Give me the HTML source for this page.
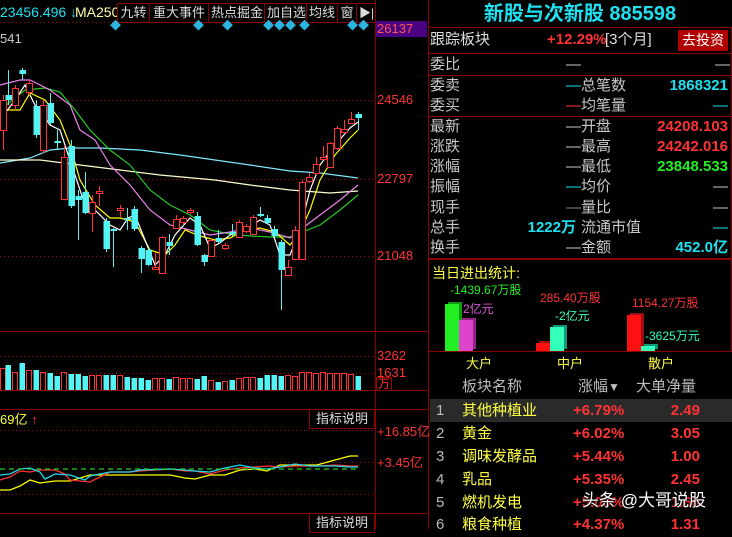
<!DOCTYPE html>
<html><head><meta charset="utf-8"><style>
*{margin:0;padding:0;box-sizing:border-box}
body{width:732px;height:529px;background:#000;overflow:hidden;position:relative;font-family:"Liberation Sans","Noto Sans CJK SC",sans-serif;color:#c8c8c8}
.a{position:absolute;white-space:nowrap;line-height:1}
.hl{position:absolute;height:1px;background:#8b0000}
.vl{position:absolute;width:1px;background:#8b0000}
.rw{position:absolute;left:430px;width:300px;height:20px;font-size:15px;line-height:20px}
.rw span{position:absolute;white-space:nowrap}
.c{color:#1ee0f0}.r{color:#ff3333}.g{color:#22ee22}.w{color:#ddd}.y{color:#ffff44}
.tb{position:absolute;top:3px;height:20px;border:1px solid #8b0000;font-size:13px;line-height:18px;color:#ddd;padding:0 2px;white-space:nowrap;overflow:hidden;text-align:center}
</style></head><body>
<svg class="a" style="left:0;top:0" width="430" height="529" id="sv">
<g stroke="#a00" stroke-dasharray="1 3" stroke-width="1">
<line x1="0" y1="22.5" x2="375" y2="22.5"/><line x1="0" y1="100.5" x2="375" y2="100.5"/><line x1="0" y1="179.5" x2="375" y2="179.5"/><line x1="0" y1="256.5" x2="375" y2="256.5"/>
<line x1="0" y1="356.5" x2="375" y2="356.5"/><line x1="0" y1="373.5" x2="375" y2="373.5"/>
<line x1="0" y1="430.5" x2="375" y2="430.5"/><line x1="0" y1="462.5" x2="375" y2="462.5"/><line x1="0" y1="494.5" x2="375" y2="494.5"/>
</g>
<g fill="none" stroke-width="1.2">
<polyline stroke="#7fe8ff" points="0,163 30,158 50,150 70,148 100,148 140,150 180,155 215,160 250,165 290,171 320,173 358,178"/>
<polyline stroke="#ffffcc" points="0,160 40,160 80,165 120,170 160,175 215,180 250,185 290,190 330,193 358,191"/>
<polyline stroke="#22cc22" points="0,110 25,90 45,88 60,92 75,110 90,130 110,150 130,165 150,190 170,205 190,215 210,230 230,234 250,236 270,237 290,237 300,233 320,225 340,210 358,195"/>
<polyline stroke="#ee82ee" points="0,85 20,80 30,80 50,90 70,105 80,130 95,140 110,165 130,185 150,210 170,225 190,230 210,235 230,232 250,228 270,232 290,238 300,230 320,215 340,200 358,185"/>
<polyline stroke="#ffff00" points="0,110 20,110 30,93 45,100 60,120 70,145 80,180 95,205 110,218 120,218 135,222 150,250 165,255 175,245 185,230 200,236 215,240 230,238 245,230 260,228 275,232 290,245 300,232 310,210 320,180 335,155 350,138 358,130"/>
<polyline stroke="#fff" points="0,120 15,100 25,85 35,105 50,125 60,130 70,160 85,205 95,210 110,225 120,230 128,218 135,215 145,240 155,265 165,255 175,235 190,218 200,225 210,248 220,243 230,235 245,230 260,220 270,225 280,255 290,255 300,230 310,190 320,165 335,145 350,128 358,122"/>
</g>
<g id="cd"></g><g id="vb"></g>
<g fill="none" stroke-width="1.3">
<polyline stroke="#ffff00" points="0,490 10,490 20,486 30,480 40,483 55,481 70,481 90,475 110,475 130,475 140,475 170,475 185,478 195,479 210,475 225,475 240,470 255,469 267,471 280,465 295,465 317,465 335,460 350,456 358,456"/>
<polyline stroke="#ff3333" points="0,480 10,477 20,471 30,472 40,470 55,470 65,474 70,480 90,482 110,472 130,472 140,471 170,469 185,471 195,471 210,474 225,470 240,468 255,467 267,466 280,467 295,466 317,466 335,465 350,466 358,466"/>
<polyline stroke="#22d8f0" points="0,475 10,474 20,469 30,468 40,472 45,479 55,474 70,475 85,480 90,476 110,472 130,472 140,470 170,469 185,470 195,471 210,472 225,468 240,465 255,468 267,469 280,467 295,464 310,466 335,466 350,467 358,467"/>
<polyline stroke="#22cc22" stroke-dasharray="5 4" points="0,469 358,469"/>
</g>
</svg>
<script>
var C=[[3,100,130,95,150,1],[8,95,100,70,105,0],[15,88,105,85,110,1],[22,70,74,68,80,0],[29,83,92,80,95,1],[36,106,135,100,138,0],[43,105,150,100,153,1],[50,103,123,93,125,0],[57,141,143,130,150,0],[64,157,199,145,200,1],[71,146,206,140,208,0],[78,196,200,190,240,0],[85,192,213,172,214,0],[92,202,213,195,232,1],[99,191,193,186,206,1],[106,221,249,218,252,0],[113,229,231,228,267,0],[120,208,210,205,217,1],[127,218,220,208,230,0],[134,209,229,206,231,0],[141,248,259,246,273,0],[148,250,265,248,266,0],[155,267,269,252,270,1],[162,237,273,236,274,1],[169,242,246,234,255,0],[176,219,228,215,229,1],[183,218,222,216,224,1],[190,210,212,208,214,1],[197,216,245,212,246,0],[204,255,262,254,266,0],[211,240,256,238,257,1],[218,238,242,230,243,0],[225,245,248,243,250,1],[232,232,234,224,236,0],[239,222,237,220,238,1],[246,226,231,224,233,1],[253,217,234,215,235,1],[260,214,216,207,217,0],[267,218,223,215,224,0],[274,229,236,226,237,0],[281,242,270,240,310,0],[288,267,275,260,276,1],[295,230,259,226,260,1],[302,182,259,180,260,1],[309,177,181,173,183,1],[316,164,173,157,175,1],[323,157,159,146,160,1],[330,143,167,142,168,1],[337,128,148,126,150,1],[344,129,132,120,134,1],[351,119,123,112,124,1],[358,114,118,112,130,0]];
var h='',v='',hs=[22,25,18,27,20,20,18,17,14,18,16,16,14,15,15,15,15,15,13,12,12,10,12,12,11,13,12,12,11,14,10,8,9,10,12,13,13,12,15,15,14,15,14,18,18,17,18,17,17,17,16,14];
C.forEach(function(c,i){var col=c[5]?'#ff3333':'#54f4f4';var x=c[0];
h+='<line x1="'+(x+.5)+'" y1="'+c[3]+'" x2="'+(x+.5)+'" y2="'+c[4]+'" stroke="'+col+'"/>';
var t=Math.min(c[1],c[2]),hh=Math.max(Math.abs(c[2]-c[1]),1);
if(c[5])h+='<rect x="'+(x-2.5)+'" y="'+(t+.5)+'" width="6" height="'+hh+'" fill="#000" stroke="'+col+'"/>';
else h+='<rect x="'+(x-2.5)+'" y="'+t+'" width="6.5" height="'+hh+'" fill="'+col+'"/>';
var vh=hs[i]||15;
if(c[5])v+='<rect x="'+(x-2.5)+'" y="'+(390.5-vh)+'" width="5" height="'+vh+'" fill="none" stroke="'+col+'"/>';
else v+='<rect x="'+(x-2.5)+'" y="'+(390-vh)+'" width="5.5" height="'+vh+'" fill="'+col+'"/>';});
document.getElementById('cd').innerHTML=h;document.getElementById('vb').innerHTML=v;
</script>
<!-- top bar -->
<div class="a c" style="left:0;top:5px;font-size:14px">23456.496 <b>↓</b></div>
<div class="a" style="left:75px;top:5px;width:42px;overflow:hidden;font-size:14px;color:#ffffaa">MA250: 2</div>
<div class="tb" style="left:117px;width:33px">九转</div>
<div class="tb" style="left:149px;width:60px">重大事件</div>
<div class="tb" style="left:208px;width:57px">热点掘金</div>
<div class="tb" style="left:264px;width:43px">加自选</div>
<div class="tb" style="left:306px;width:32px">均线</div>
<div class="tb" style="left:337px;width:20px">窗</div>
<div class="tb" style="left:356px;width:20px;font-size:12px">▶|</div>
<div class="a" style="left:0;top:32px;font-size:13px;color:#ccc">541</div>
<div class="a" style="left:110px;top:21px;font-size:11px;color:#2ab4e0">◆</div>
<div class="a" style="left:193px;top:21px;font-size:11px;color:#2ab4e0">◆</div>
<div class="a" style="left:222px;top:21px;font-size:11px;color:#2ab4e0">◆</div>
<div class="a" style="left:263px;top:21px;font-size:11px;color:#2ab4e0">◆◆◆</div>
<div class="a" style="left:299px;top:21px;font-size:11px;color:#2ab4e0">◆</div>
<div class="a" style="left:347px;top:21px;font-size:11px;color:#2ab4e0">◆◆</div>
<!-- axis -->
<div class="vl" style="left:375px;top:0;height:529px"></div>
<div class="vl" style="left:428px;top:0;height:529px"></div>
<div class="a" style="left:376px;top:21px;width:51px;height:16px;background:#4b0082;color:#ff5555;font-size:13px;padding:1px 0 0 1px">26137</div>
<div class="a r" style="left:377px;top:93px;font-size:13px">24546</div>
<div class="a r" style="left:377px;top:172px;font-size:13px">22797</div>
<div class="a r" style="left:377px;top:249px;font-size:13px">21048</div>
<div class="a r" style="left:377px;top:349px;font-size:13px">3262</div>
<div class="a r" style="left:377px;top:366px;font-size:13px">1631</div>
<div class="a r" style="left:376px;top:377px;font-size:12px;border:1px solid #a00;padding:0 1px">万</div>
<div class="hl" style="left:0;top:331px;width:428px"></div>
<div class="hl" style="left:0;top:390px;width:428px"></div>
<div class="hl" style="left:0;top:409px;width:428px"></div>
<div class="hl" style="left:0;top:513px;width:428px"></div>
<div class="a y" style="left:0;top:413px;font-size:13px">69亿 <span class="r">↑</span></div>
<div class="a" style="left:309px;top:409px;width:66px;height:20px;border:1px solid #8b0000;font-size:13px;line-height:18px;text-align:center;color:#ddd">指标说明</div>
<div class="a" style="left:309px;top:513px;width:66px;height:20px;border:1px solid #8b0000;font-size:13px;line-height:18px;text-align:center;color:#ddd">指标说明</div>
<div class="a r" style="left:377px;top:425px;font-size:13px">+16.85亿</div>
<div class="a r" style="left:377px;top:456px;font-size:13px">+3.45亿</div>
<!-- right panel -->
<div class="a c" style="left:428px;top:4px;width:304px;text-align:center;font-size:20px;font-weight:bold">新股与次新股 885598</div>
<div class="a" style="left:428px;top:27px;width:304px;height:232px;border:1px solid #8b0000"></div>
<div class="hl" style="left:428px;top:53px;width:304px"></div>
<div class="hl" style="left:428px;top:75px;width:304px"></div>
<div class="hl" style="left:428px;top:116px;width:304px"></div>
<div class="rw" style="top:30px"><span class="w">跟踪板块</span><span class="r" style="left:117px;font-weight:bold">+12.29%</span><span class="w" style="left:175px">[3个月]</span></div>
<div class="a" style="left:678px;top:30px;width:50px;height:21px;background:#b00000;color:#fff;font-size:14px;line-height:21px;text-align:center">去投资</div>
<div class="rw" style="top:55px"><span>委比</span><span style="left:136px">—</span><span style="left:285px">—</span></div>
<div class="rw" style="top:76px"><span>委卖</span><span class="c" style="left:136px">—</span><span style="left:151px">总笔数</span><span class="c" style="right:2px;font-weight:bold">1868321</span></div>
<div class="rw" style="top:96px"><span>委买</span><span class="r" style="left:136px">—</span><span style="left:151px">均笔量</span><span class="c" style="right:2px">—</span></div>
<div class="rw" style="top:117px"><span>最新</span><span style="left:136px">—</span><span style="left:151px">开盘</span><span class="r" style="right:2px;font-weight:bold">24208.103</span></div>
<div class="rw" style="top:137px"><span>涨跌</span><span style="left:136px">—</span><span style="left:151px">最高</span><span class="r" style="right:2px;font-weight:bold">24242.016</span></div>
<div class="rw" style="top:157px"><span>涨幅</span><span style="left:136px">—</span><span style="left:151px">最低</span><span class="g" style="right:2px;font-weight:bold">23848.533</span></div>
<div class="rw" style="top:177px"><span>振幅</span><span class="c" style="left:136px">—</span><span style="left:151px">均价</span><span style="right:2px">—</span></div>
<div class="rw" style="top:198px"><span>现手</span><span style="left:136px;color:#888">—</span><span style="left:151px">量比</span><span style="right:2px">—</span></div>
<div class="rw" style="top:218px"><span>总手</span><span class="c" style="right:154px;font-weight:bold">1222万</span><span style="left:151px">流通市值</span><span class="c" style="right:2px">—</span></div>
<div class="rw" style="top:238px"><span>换手</span><span style="left:136px">—</span><span style="left:151px">金额</span><span class="c" style="right:2px;font-weight:bold">452.0亿</span></div>
<div class="a" style="left:428px;top:259px;width:304px;height:93px;border:1px solid #8b0000"></div>
<div class="a y" style="left:432px;top:266px;font-size:14px">当日进出统计:</div>
<div class="a g" style="left:450px;top:284px;font-size:12px">-1439.67万股</div>
<div class="a" style="left:463px;top:303px;font-size:12px;color:#dd55dd">2亿元</div>
<div class="a r" style="left:540px;top:292px;font-size:12px">285.40万股</div>
<div class="a" style="left:555px;top:310px;font-size:12px;color:#33ffbb">-2亿元</div>
<div class="a r" style="left:632px;top:297px;font-size:12px">1154.27万股</div>
<div class="a" style="left:645px;top:330px;font-size:12px;color:#33ffbb">-3625万元</div>
<div class="a" style="left:445px;top:304px;width:14px;height:47px;background:#22ee22;box-shadow:3px -2px 0 #119911"></div>
<div class="a" style="left:459px;top:320px;width:14px;height:31px;background:#dd44cc;box-shadow:3px -2px 0 #992288"></div>
<div class="a" style="left:536px;top:343px;width:14px;height:8px;background:#ff1111;box-shadow:3px -2px 0 #991111"></div>
<div class="a" style="left:550px;top:327px;width:14px;height:24px;background:#33ffbb;box-shadow:3px -2px 0 #119977"></div>
<div class="a" style="left:627px;top:315px;width:14px;height:36px;background:#ff1111;box-shadow:3px -2px 0 #991111"></div>
<div class="a" style="left:641px;top:346px;width:14px;height:5px;background:#33ffbb;box-shadow:3px -2px 0 #119977"></div>
<div class="a y" style="left:466px;top:357px;font-size:13px">大户</div>
<div class="a y" style="left:557px;top:357px;font-size:13px">中户</div>
<div class="a y" style="left:648px;top:357px;font-size:13px">散户</div>
<div class="a" style="left:462px;top:379px;font-size:15px;color:#bbb">板块名称</div>
<div class="a" style="left:578px;top:379px;font-size:15px;color:#bbb">涨幅<span style="font-size:12px">▼</span></div>
<div class="a" style="left:636px;top:379px;font-size:15px;color:#bbb">大单净量</div>
<div class="a" style="left:430px;top:399px;width:302px;height:23px;background:#2a2a2a"></div>
<div class="rw" style="top:400px;height:23px;line-height:22px;font-size:15px"><span style="left:6px;color:#bbb">1</span><span class="y" style="left:32px">其他种植业</span><span class="r" style="left:143px;font-weight:bold">+6.79%</span><span class="r" style="right:30px;font-weight:bold">2.49</span></div>
<div class="rw" style="top:423px;height:23px;line-height:22px;font-size:15px"><span style="left:6px;color:#bbb">2</span><span class="y" style="left:32px">黄金</span><span class="r" style="left:143px;font-weight:bold">+6.02%</span><span class="r" style="right:30px;font-weight:bold">3.05</span></div>
<div class="rw" style="top:446px;height:23px;line-height:22px;font-size:15px"><span style="left:6px;color:#bbb">3</span><span class="y" style="left:32px">调味发酵品</span><span class="r" style="left:143px;font-weight:bold">+5.44%</span><span class="r" style="right:30px;font-weight:bold">1.00</span></div>
<div class="rw" style="top:469px;height:23px;line-height:22px;font-size:15px"><span style="left:6px;color:#bbb">4</span><span class="y" style="left:32px">乳品</span><span class="r" style="left:143px;font-weight:bold">+5.35%</span><span class="r" style="right:30px;font-weight:bold">2.45</span></div>
<div class="rw" style="top:492px;height:23px;line-height:22px;font-size:15px"><span style="left:6px;color:#bbb">5</span><span class="y" style="left:32px">燃机发电</span><span class="r" style="left:143px;font-weight:bold">+5.00%</span><span class="r" style="right:30px;font-weight:bold">1.66</span></div>
<div class="rw" style="top:514px;height:23px;line-height:22px;font-size:15px"><span style="left:6px;color:#bbb">6</span><span class="y" style="left:32px">粮食种植</span><span class="r" style="left:143px;font-weight:bold">+4.37%</span><span class="r" style="right:30px;font-weight:bold">1.31</span></div>
<div class="a" style="left:582px;top:492px;font-size:17px;color:#fff;text-shadow:0 0 2px #000,0 0 2px #000">头条 @大哥说股</div>
</body></html>
